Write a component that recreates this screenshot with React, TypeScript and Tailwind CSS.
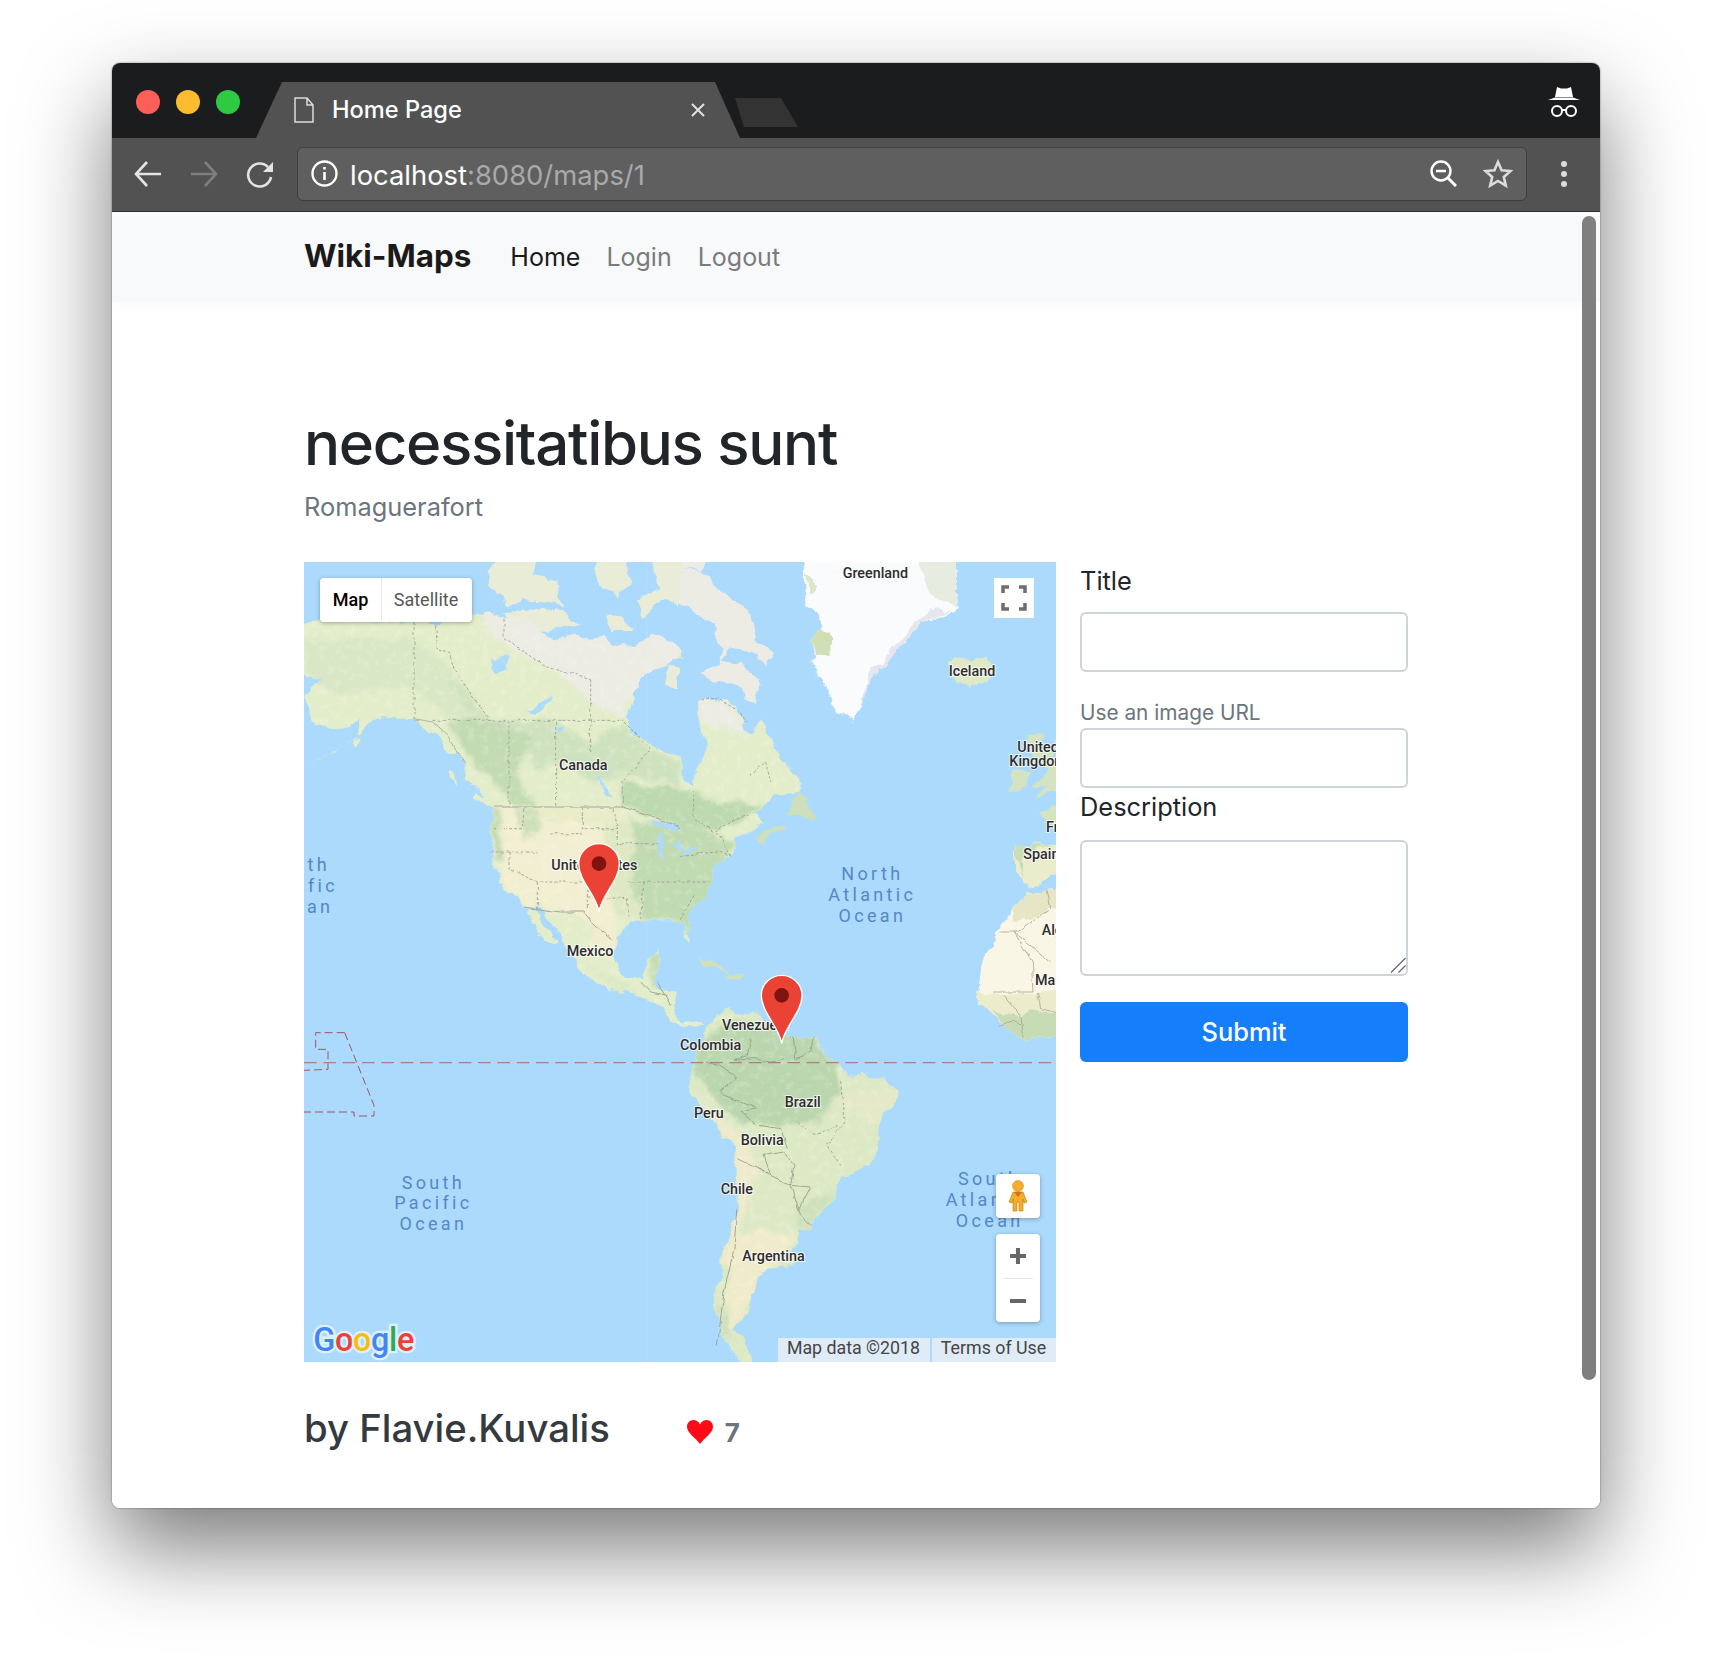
import React from 'react';

const northAmerica =
  'M-30 225 L-30 205 L60 170 L200 175 L340 180 L420 190 L480 165 L550 155 L600 170 L680 175 L700 210 L760 230 L800 215 L860 240 L905 215 L930 245 L1000 250 L1060 215 L1128 255 L1140 285 L1085 305 L1020 340 L985 400 L965 470 L985 510 L1040 550 L1128 590 L1138 640 L1168 680 L1175 610 L1205 560 L1190 500 L1188 410 L1278 420 L1308 460 L1318 500 L1343 520 L1368 470 L1398 530 L1418 590 L1468 620 L1493 660 L1478 690 L1420 700 L1378 730 L1330 770 L1258 810 L1300 775 L1360 755 L1375 790 L1350 810 L1290 830 L1285 880 L1235 900 L1225 960 L1200 1000 L1150 1050 L1160 1130 L1150 1140 L1135 1070 L1128 1080 L1000 1075 L935 1125 L925 1180 L945 1225 L980 1250 L1020 1245 L1030 1200 L1065 1160 L1075 1195 L1050 1250 L1060 1285 L1115 1295 L1110 1330 L1128 1380 L1188 1375 L1203 1395 L1128 1392 L1090 1360 L1060 1325 L1000 1300 L940 1280 L870 1260 L825 1230 L815 1200 L790 1150 L720 1050 L665 1030 L640 1010 L590 960 L560 870 L565 800 L570 740 L530 700 L490 650 L480 600 L430 560 L380 510 L340 475 L270 460 L230 460 L180 500 L80 580 L5 612 L60 590 L160 520 L170 470 L90 510 L20 470 L10 400 L60 350 L-30 330 Z';

const southAmerica =
  'M1203 1405 L1238 1365 L1278 1335 L1288 1350 L1368 1355 L1428 1430 L1468 1425 L1528 1425 L1568 1470 L1593 1505 L1648 1540 L1738 1550 L1778 1580 L1778 1620 L1728 1690 L1723 1760 L1698 1810 L1608 1840 L1588 1900 L1528 1990 L1478 2010 L1483 2040 L1458 2070 L1498 2080 L1458 2110 L1388 2120 L1368 2150 L1338 2200 L1343 2240 L1298 2300 L1323 2340 L1358 2430 L1318 2430 L1258 2330 L1228 2240 L1248 2160 L1253 2100 L1278 2010 L1298 1940 L1298 1840 L1298 1760 L1238 1690 L1178 1620 L1148 1570 L1158 1540 L1178 1490 L1188 1440 Z';

const Pin = ({ x, y }: { x: number; y: number }) => (
  <g transform={`translate(${x} ${y})`}>
    <path
      d="M0 205 C-6 155 -61 112 -61 60 A61 60 0 0 1 61 60 C61 112 6 155 0 205Z"
      fill="#ea4335"
      stroke="#ffffff"
      strokeWidth="4"
    />
    <circle cx="0" cy="60" r="22" fill="#7f1310" />
  </g>
);

const places: [string, number, number][] = [
  ['Greenland', 1616, 48],
  ['Iceland', 1934, 343],
  ['United', 2140, 570],
  ['Kingdom', 2116, 613],
  ['France', 2226, 810],
  ['Spain', 2158, 892],
  ['Algeria', 2213, 1118],
  ['Mali', 2193, 1270],
  ['Canada', 765, 625],
  ['United States', 742, 925],
  ['Mexico', 788, 1182],
  ['Venezuela', 1254, 1404],
  ['Colombia', 1128, 1464],
  ['Brazil', 1442, 1634],
  ['Peru', 1170, 1668],
  ['Bolivia', 1310, 1750],
  ['Chile', 1250, 1896],
  ['Argentina', 1315, 2096],
];

const oceans: [string, number, number, 'middle' | 'end'][] = [
  ['North', 1705, 955, 'middle'],
  ['Atlantic', 1705, 1017, 'middle'],
  ['Ocean', 1705, 1080, 'middle'],
  ['South', 388, 1880, 'middle'],
  ['Pacific', 388, 1942, 'middle'],
  ['Ocean', 388, 2005, 'middle'],
  ['North', 78, 927, 'end'],
  ['Pacific', 102, 990, 'end'],
  ['Ocean', 88, 1052, 'end'],
  ['South', 2057, 1870, 'middle'],
  ['Atlantic', 2057, 1933, 'middle'],
  ['Ocean', 2057, 1995, 'middle'],
];

const borders = [
  'M330 180 L330 470',
  'M395 190 L400 260 L435 270 L450 320 L500 400 L560 470',
  'M385 475 L960 475',
  'M615 475 L615 735',
  'M755 480 L755 735',
  'M860 350 L860 570',
  'M600 170 L600 230 L720 310 L860 350',
  'M960 480 L1040 560 L955 660 L955 735',
  'M1188 410 L1240 410 L1310 450 L1330 480',
  'M1168 680 L1170 770 L1230 810 L1300 770 L1330 760',
  'M1340 640 L1385 600 L1400 660',
  'M570 800 L655 800 L660 740',
  'M615 870 L615 920 L700 960 L850 960 L850 1040',
  'M740 815 L835 815 L835 800 L940 800 L940 845 L1060 845',
  'M560 870 L700 870',
  'M700 960 L700 1040',
  'M835 735 L835 800',
  'M930 740 L940 800',
  'M850 1005 L970 1010 L975 1060',
  'M970 960 L1128 960 L1220 960',
  'M1020 960 L1010 1070',
  'M1128 880 L1240 870 L1290 880',
  'M1170 1000 L1128 1075',
  'M1240 810 L1280 880',
];

const saBorders = [
  'M1208 1500 L1240 1510 L1298 1545 L1250 1590 L1260 1600 L1360 1640 L1310 1650 L1360 1690 L1430 1700 L1450 1760',
  'M1340 1430 L1330 1480 L1290 1495 L1350 1490 L1400 1500 L1440 1490',
  'M1468 1425 L1475 1490 L1520 1470 L1528 1425',
  'M1400 1840 L1380 1780 L1440 1770 L1470 1810 L1460 1870 L1520 1875 L1480 1950',
  'M1360 1820 L1460 1870 L1490 1960 L1520 1990',
  'M1300 1790 L1360 1820 L1400 1840',
  'M1298 1940 L1290 2060 L1260 2190 L1240 2350',
];

const saDashed = ['M1610 1560 L1620 1680 L1570 1750 L1610 1810', 'M1480 1680 L1530 1720 L1600 1690'];

const WorldMap = () => (
  <svg viewBox="0 0 2256 2400" className="absolute inset-0 w-full h-full">
    <defs>
      <clipPath id="naClip">
        <path d={northAmerica} />
      </clipPath>
      <clipPath id="saClip">
        <path d={southAmerica} />
      </clipPath>
      <clipPath id="landClip">
        <path d={northAmerica} />
        <path d={southAmerica} />
      </clipPath>
      <filter id="soft" x="-5%" y="-5%" width="110%" height="110%">
        <feGaussianBlur stdDeviation="7" />
      </filter>
      <filter id="organic" filterUnits="userSpaceOnUse" x="-40" y="-40" width="2336" height="2480">
        <feTurbulence type="fractalNoise" baseFrequency="0.018" numOctaves="4" seed="7" />
        <feDisplacementMap in="SourceGraphic" scale="38" xChannelSelector="R" yChannelSelector="G" />
        <feGaussianBlur stdDeviation="1.2" />
      </filter>
      <filter id="fineLine" filterUnits="userSpaceOnUse" x="-40" y="-40" width="2336" height="2480">
        <feTurbulence type="fractalNoise" baseFrequency="0.03" numOctaves="3" seed="3" />
        <feDisplacementMap in="SourceGraphic" scale="14" xChannelSelector="R" yChannelSelector="G" />
      </filter>
      <filter id="mottle" filterUnits="userSpaceOnUse" x="0" y="0" width="2256" height="2400">
        <feTurbulence type="fractalNoise" baseFrequency="0.045" numOctaves="3" seed="11" />
        <feColorMatrix values="0 0 0 0 1 0 0 0 0 1 0 0 0 0 0.92 3.4 0 0 0 -1.7" />
      </filter>
    </defs>
    <rect width="2256" height="2400" fill="#abdafd" />
    <path d="M1028 0 V2400" stroke="#b6dffb" strokeWidth="3" />

    <g filter="url(#organic)">
      {/* arctic islands */}
      <g fill="#e9ecd6">
        <path d="M545 30 L600 -30 L700 -30 L680 40 L760 50 L770 130 L660 110 L620 130 L560 70Z" />
        <path d="M870 -30 L950 -30 L980 60 L940 110 L880 60Z" />
        <path d="M1040 -30 L1128 -30 L1128 130 L1080 110 L1020 170 L1000 120 L1060 70Z" />
        <path d="M600 150 L760 140 L830 180 L700 215 L620 200Z" />
        <path d="M905 170 L950 160 L990 210 L930 210Z" />
        <path d="M1080 310 L1128 320 L1128 380 L1090 370Z" />
      </g>
      <g fill="#ecece5">
        <path d="M1128 20 L1208 40 L1258 90 L1338 150 L1358 230 L1413 270 L1388 320 L1338 270 L1278 250 L1248 300 L1318 300 L1373 370 L1353 420 L1278 370 L1188 340 L1238 310 L1258 260 L1228 190 L1168 150 L1128 120Z" />
        <path d="M1128 -30 L1220 -30 L1190 30 L1128 20Z" />
      </g>

      {/* north america */}
      <path d={northAmerica} fill="#e3edca" />
      <g clipPath="url(#naClip)">
        <g filter="url(#soft)">
          <path d="M540 150 L1128 100 L1128 300 L960 420 L980 480 L860 420 L760 330 L640 270 L540 200Z" fill="#ecece5" />
          <path d="M1188 410 L1278 420 L1330 520 L1260 490 L1200 490Z" fill="#ecece5" />
          <path d="M0 230 L330 230 L450 330 L560 470 L430 470 L330 380 L240 380 L100 400 L0 330Z" fill="#d9e7c6" />
          <path d="M420 330 L560 470 L760 480 L860 540 L960 490 L1040 560 L1128 600 L1128 680 L1000 640 L880 660 L760 600 L700 620 L620 500 L480 440Z" fill="#cfe2bf" />
          <path d="M430 480 L560 470 L680 530 L640 640 L690 730 L640 735 L560 650 L470 560Z" fill="#c2dbb2" />
          <path d="M955 660 L1128 685 L1178 700 L1258 720 L1378 730 L1300 780 L1240 810 L1170 800 L1128 790 L955 735Z" fill="#bdd9af" />
          <path d="M570 735 L960 735 L950 1000 L930 1130 L870 1090 L770 1050 L660 1030 L590 950 L570 800Z" fill="#f2eed2" />
          <path d="M700 735 L950 735 L945 800 L700 770Z" fill="#e9ecc8" />
          <path d="M640 740 L700 740 L710 820 L650 830Z" fill="#cfe0b9" />
          <path d="M900 780 L1000 780 L1000 1075 L930 1060Z" fill="#dfe8c3" />
          <path d="M985 780 L1128 790 L1290 840 L1240 960 L1170 1130 L1128 1080 L1020 1075 L990 1000Z" fill="#c0dab1" />
          <path d="M565 740 L590 740 L600 900 L570 890Z" fill="#c6dcb5" />
          <path d="M820 1200 L960 1260 L1000 1290 L1050 1320 L1100 1380 L1040 1320 L920 1270Z" fill="#dbe8c4" />
          <path d="M1040 1180 L1075 1165 L1070 1280 L1040 1270Z" fill="#c4dcb4" />
          <path d="M860 1060 L930 1130 L930 1200 L880 1190Z" fill="#f0edcf" />
        </g>
      </g>
      {/* lakes */}
      <g fill="#abdafd">
        <path d="M550 290 L620 275 L610 320 L580 330Z" />
        <path d="M665 445 L740 400 L750 410 L700 450Z" />
        <path d="M750 495 L785 490 L765 510Z" />
        <path d="M880 645 L895 650 L925 700 L905 695Z" />
        <path d="M1040 775 L1110 785 L1128 800 L1060 795Z" />
        <path d="M1065 830 L1085 815 L1085 880 L1070 895Z" />
        <path d="M1128 815 L1140 870 L1105 860 L1128 840Z" />
        <path d="M1128 875 L1170 845 L1178 852 L1135 885Z" />
      </g>
      <g fill="#e3edca">
        <path d="M670 1035 L700 1060 L770 1150 L745 1150 L700 1100 L665 1050Z" />
        <path d="M510 695 L560 725 L555 740 L505 710Z" />
        <path d="M438 625 L455 630 L462 660 L445 650Z" />
        <path d="M1350 825 L1428 785 L1438 795 L1368 840Z" fill="#cde0bb" />
        <path d="M1448 760 L1478 690 L1528 740 L1533 780 L1490 760Z" fill="#cde0bb" />
        <path d="M145 530 L170 520 L160 555Z" />
        <path d="M1188 1184 L1230 1195 L1280 1240 L1240 1225 L1200 1200Z" fill="#cfe2bc" />
        <path d="M1258 1238 L1320 1242 L1315 1255 L1265 1252Z" fill="#cfe2bc" />
      </g>

      {/* greenland and iceland */}
      <path d="M1503 -30 L1958 -30 L1958 130 L1943 150 L1848 190 L1788 240 L1738 300 L1703 350 L1668 430 L1658 478 L1598 450 L1558 370 L1528 290 L1523 240 L1558 190 L1508 130 L1498 40Z" fill="#fafbfd" />
      <path d="M1523 240 L1558 190 L1578 230 L1580 285 L1530 275Z" fill="#d2dfb6" />
      <path d="M1848 -30 L1958 -30 L1958 130 L1900 120 L1860 70Z" fill="#e7ece1" />
      <path d="M1503 30 L1540 70 L1520 100Z" fill="#dbe6cb" />
      <path d="M1848 190 L1938 145 L1880 150 L1830 190 L1788 240 L1740 295 L1700 330 L1670 420 L1668 430 L1700 360 L1740 310 Z" fill="#e5e7ec" />
      <path d="M1933 300 L1958 285 L1998 295 L2038 280 L2073 330 L2058 350 L1998 378 L1948 350Z" fill="#dfe9c6" />

      {/* europe and africa */}
      <g fill="#d4e4c0">
        <path d="M2128 625 L2173 625 L2168 670 L2123 680Z" />
        <path d="M2168 530 L2213 515 L2208 560 L2290 600 L2290 690 L2190 710 L2230 680 L2195 665 L2230 620 L2190 590Z" />
        <path d="M2290 730 L2198 745 L2238 790 L2290 850Z" />
      </g>
      <path d="M2133 845 L2290 850 L2290 930 L2228 950 L2178 975 L2148 955 L2133 930Z" fill="#eaeccc" />
      <path d="M2133 845 L2240 852 L2160 870 L2150 950Z" fill="#c9deb6" />
      <path d="M2178 985 L2290 985 L2290 1430 L2218 1420 L2158 1440 L2088 1390 L2028 1320 L2023 1290 L2033 1200 L2038 1190 L2088 1110 L2128 1040Z" fill="#faf6e6" />
      <path d="M2178 985 L2290 985 L2290 1040 L2200 1060 L2130 1080 L2128 1040Z" fill="#e6e6c6" />
      <path d="M2023 1290 L2100 1300 L2290 1280 L2290 1430 L2218 1420 L2158 1440 L2088 1390 L2028 1320Z" fill="#eaeccc" />
      <path d="M2060 1340 L2150 1360 L2290 1340 L2290 1430 L2218 1420 L2158 1440 L2088 1390Z" fill="#c7dcb4" />

      {/* south america */}
      <path d={southAmerica} fill="#dde9c5" />
      <g clipPath="url(#saClip)">
        <g filter="url(#soft)">
          <path d="M1188 1440 L1290 1370 L1528 1430 L1600 1510 L1600 1600 L1540 1680 L1430 1690 L1310 1680 L1230 1600 L1170 1540Z" fill="#bad6ae" />
          <path d="M1148 1570 L1298 1760 L1298 1940 L1278 2010 L1253 2100 L1275 2110 L1320 1940 L1368 1820 L1308 1720 L1228 1650Z" fill="#efeacd" />
          <path d="M1280 2030 L1390 2000 L1478 2030 L1368 2150 L1298 2300 L1268 2300Z" fill="#f0ebcb" />
          <path d="M1480 1920 L1590 1890 L1530 1990 L1480 2010Z" fill="#cfe1ba" />
          <path d="M1600 1600 L1778 1580 L1730 1690 L1640 1640Z" fill="#e5e9c8" />
          <path d="M1228 2240 L1260 2240 L1290 2330 L1258 2330Z" fill="#cfe0c0" />
        </g>
      </g>
    </g>

    <g clipPath="url(#landClip)" opacity="0.2">
      <rect width="2256" height="2400" filter="url(#mottle)" />
    </g>

    {/* country borders */}
    <g filter="url(#fineLine)">
      <g fill="none" stroke="#9c9a90" strokeWidth="2.5" strokeDasharray="9 6">
        {borders.map((d, i) => (
          <path key={i} d={d} />
        ))}
        {saDashed.map((d, i) => (
          <path key={i} d={d} />
        ))}
      </g>
      <path d="M570 735 L955 735 L1040 760 L1128 800" fill="none" stroke="#a6a69c" strokeWidth="3" />
      <path d="M660 1035 L770 1050 L840 1050 L870 1090 L925 1130" fill="none" stroke="#a6a69c" strokeWidth="3" />
      <path d="M330 470 L385 480 L430 520 L480 600" fill="none" stroke="#a6a69c" strokeWidth="2.5" />
      <g fill="none" stroke="#8f9a88" strokeWidth="2.5">
        {saBorders.map((d, i) => (
          <path key={i} d={d} />
        ))}
        <path d="M1010 1260 L1040 1290 L1090 1300 M1060 1260 L1100 1330" />
      </g>
      <g fill="none" stroke="#a8a596" strokeWidth="2.5">
        <path d="M2070 1290 L2190 1290 L2185 1200 L2130 1110 L2240 1200" />
        <path d="M2090 1110 L2140 1110 L2240 1040 L2230 985" />
        <path d="M2100 1300 L2150 1360 L2160 1430" />
        <path d="M2200 1290 L2210 1340 L2256 1350" />
        <path d="M2085 1390 L2130 1375 L2150 1390" />
      </g>
    </g>

    {/* equator and the pacific line */}
    <path d="M0 1502 H2256" fill="none" stroke="#aa7f86" strokeWidth="4" strokeDasharray="38 20" />
    <path
      d="M122 1412 L35 1412 L35 1462 L72 1462 L72 1522 L0 1525 M122 1412 L210 1630 L210 1662 L150 1662 L150 1650 L0 1650"
      fill="none"
      stroke="#a3555f"
      strokeWidth="3"
      strokeDasharray="24 12"
    />

    {/* labels */}
    <g fontFamily="Roboto, sans-serif" fontWeight="500" fontSize="43" fill="#2c2c2c" stroke="#ffffff" strokeWidth="6" strokeOpacity="0.75" className="[paint-order:stroke]">
      {places.map(([name, x, y]) => (
        <text key={name} x={x} y={y}>
          {name}
        </text>
      ))}
    </g>
    <g fontFamily="Roboto, sans-serif" fontSize="54" fill="#5587c8" letterSpacing="10">
      {oceans.map(([name, x, y, anchor], i) => (
        <text key={i} x={x} y={y} textAnchor={anchor}>
          {name}
        </text>
      ))}
    </g>

    <Pin x={885} y={845} />
    <Pin x={1433} y={1240} />

    <text x="28" y="2366" fontFamily="Roboto, sans-serif" fontSize="97" fontWeight="500" letterSpacing="-1" stroke="#dff0fd" strokeWidth="14" className="[paint-order:stroke]">
      <tspan fill="#4285f4">G</tspan>
      <tspan fill="#ea4335">o</tspan>
      <tspan fill="#fbbc05">o</tspan>
      <tspan fill="#4285f4">g</tspan>
      <tspan fill="#34a853">l</tspan>
      <tspan fill="#ea4335">e</tspan>
    </text>
  </svg>
);

const MapControls = () => (
  <>
    <div className="absolute left-4 top-4 flex h-11 w-[152px] rounded-sm bg-white pb-px shadow-[0_1px_4px_rgba(0,0,0,0.3)] font-['Roboto',sans-serif] text-[18px]">
      <div className="flex w-[62px] items-center justify-center border-r border-[#e6e6e6] font-medium text-black">Map</div>
      <div className="flex flex-1 items-center justify-center pr-0.5 text-[#565656]">Satellite</div>
    </div>
    <div className="absolute left-[690px] top-4 flex h-10 w-10 items-center justify-center bg-white">
      <svg width="26" height="26" viewBox="0 0 26 26" fill="none" stroke="#6e6e6e" strokeWidth="3.5">
        <path d="M2 8 V2 H8 M18 2 H24 V8 M24 18 V24 H18 M8 24 H2 V18" />
      </svg>
    </div>
    <div className="absolute left-[692px] top-[612px] flex h-11 w-11 items-center justify-center rounded-sm bg-white shadow-[0_1px_4px_rgba(0,0,0,0.3)]">
      <svg width="20" height="32" viewBox="0 0 20 32">
        <circle cx="10" cy="6" r="5.5" fill="#f6ae29" stroke="#c98a1d" strokeWidth="0.5" />
        <path d="M5 12 H15 L19 22 L16 23 L15 19 V31 H11 V22 H9 V31 H5 V19 L4 23 L1 22Z" fill="#f6ae29" stroke="#b07a1a" strokeWidth="0.6" />
        <path d="M6 12 L10 17 L14 12Z" fill="#d5702a" />
      </svg>
    </div>
    <div className="absolute left-[692px] top-[672px] flex h-[88px] w-11 flex-col items-center rounded-sm bg-white shadow-[0_1px_4px_rgba(0,0,0,0.3)]">
      <div className="flex h-11 w-full items-center justify-center">
        <svg width="18" height="18" viewBox="0 0 18 18" fill="#666666">
          <path d="M7 1 H11 V7 H17 V11 H11 V17 H7 V11 H1 V7 H7Z" />
        </svg>
      </div>
      <div className="h-px w-[30px] bg-[#e6e6e6]" />
      <div className="flex h-11 w-full items-center justify-center pt-0.5">
        <svg width="18" height="18" viewBox="0 0 18 18" fill="#666666">
          <path d="M1 7 H17 V11 H1Z" />
        </svg>
      </div>
    </div>
    <div className="absolute bottom-0 right-0 flex h-6 gap-0.5 font-['Roboto',sans-serif] text-[17.8px] leading-[19px] text-[#444444]">
      <div className="w-[152px] bg-[#dfecf8] pr-px text-center">Map data ©2018</div>
      <div className="w-[124px] bg-[#dfecf8] pr-px text-center">Terms of Use</div>
    </div>
  </>
);

const ChromeBar = () => (
  <>
    <div className="relative flex h-[75px] shrink-0 bg-[#1b1c1e]">
      <div className="ml-6 mt-[27px] flex gap-4">
        <div className="h-6 w-6 rounded-full bg-[#fc5f57]" />
        <div className="h-6 w-6 rounded-full bg-[#fdbc2f]" />
        <div className="h-6 w-6 rounded-full bg-[#2ecb42]" />
      </div>
      <div className="ml-4 mt-[19px] flex h-14 w-[484px] items-center bg-[#525252] pl-[38px] pr-[35px] [clip-path:polygon(0_100%,26px_0,459px_0,484px_100%)]">
        <svg width="20" height="26" viewBox="0 0 20 26" fill="none" stroke="#dcdcdc" strokeWidth="1.5">
          <path d="M1 1 H13 L19 8 V25 H1Z M13 1 V8 H19" />
        </svg>
        <span className="ml-[18px] flex-1 font-['Inter',sans-serif] text-[23.6px] font-medium text-white">Home Page</span>
        <svg width="14" height="14" viewBox="0 0 14 14" stroke="#e2e2e2" strokeWidth="2">
          <path d="M1 1 L13 13 M13 1 L1 13" />
        </svg>
      </div>
      <div className="-ml-[5px] mt-[35px] h-[29px] w-[63px] bg-[#333333] [clip-path:polygon(0_0,46px_0,63px_100%,9px_100%)]" />
      <svg className="absolute right-5 top-6" width="32" height="30" viewBox="0 0 32 30">
        <path d="M9 0 L13 1.5 H19 L23 0 L25 10 H7Z" fill="#ffffff" />
        <path d="M0 13 L7 10.5 H25 L32 13Z" fill="#ffffff" />
        <g fill="none" stroke="#ffffff" strokeWidth="2">
          <circle cx="9" cy="24" r="5" />
          <circle cx="23" cy="24" r="5" />
          <path d="M14 23 H18" />
        </g>
      </svg>
    </div>
    <div className="flex h-[74px] shrink-0 items-center border-b border-[#2e2e2e] bg-[#525252] pb-0.5">
      <svg className="ml-[22px]" width="28" height="26" viewBox="0 0 28 26" fill="none" stroke="#e4e4e4" strokeWidth="2.6">
        <path d="M27 13 H2 M13 1 L2 13 L13 25" />
      </svg>
      <svg className="ml-[28px]" width="28" height="26" viewBox="0 0 28 26" fill="none" stroke="#7e7e7e" strokeWidth="2.6">
        <path d="M1 13 H26 M15 1 L26 13 L15 25" />
      </svg>
      <svg className="ml-[28px]" width="28" height="28" viewBox="0 0 28 28" fill="none">
        <path d="M22 7 A11.5 11.5 0 1 0 25 17" stroke="#e4e4e4" strokeWidth="2.6" />
        <path d="M27 2 V12 H17Z" fill="#e4e4e4" />
      </svg>
      <div className="ml-[23px] flex h-[54px] w-[1230px] items-center rounded-md border border-[#3e3e3e] bg-[#5f5f5f] pl-[13px] pr-3">
        <svg width="27" height="27" viewBox="0 0 27 27" fill="none">
          <circle cx="13.5" cy="13.5" r="12" stroke="#ffffff" strokeWidth="2.4" />
          <path d="M13.5 12 V20 M13.5 7 V9.5" stroke="#ffffff" strokeWidth="2.6" />
        </svg>
        <span className="ml-3 flex-1 pt-1 font-['Inter',sans-serif] text-[27.4px] text-white">
          localhost<span className="text-[#a9a9a9]">:8080/maps/1</span>
        </span>
        <svg width="27" height="27" viewBox="0 0 27 27" fill="none" stroke="#ffffff" strokeWidth="2.4">
          <circle cx="11" cy="11" r="9.5" />
          <path d="M6 11 H16" />
          <path d="M18 18 L26 26" strokeWidth="3" />
        </svg>
        <svg className="ml-[26px] mr-[1px]" width="30" height="29" viewBox="0 0 30 29" fill="none" stroke="#dcdcdc" strokeWidth="2.6">
          <path d="M15 3 L18.6 11.2 L27.5 12 L20.8 17.9 L22.8 26.6 L15 22 L7.2 26.6 L9.2 17.9 L2.5 12 L11.4 11.2Z" />
        </svg>
      </div>
      <div className="ml-[34px] flex flex-col gap-1">
        <div className="h-1.5 w-1.5 rounded-full bg-[#dcdcdc]" />
        <div className="h-1.5 w-1.5 rounded-full bg-[#dcdcdc]" />
        <div className="h-1.5 w-1.5 rounded-full bg-[#dcdcdc]" />
      </div>
    </div>
  </>
);

const Field = ({ className }: { className: string }) => (
  <input type="text" className={`block h-[60px] w-full rounded-md border-2 border-[#ced4da] bg-white ${className}`} />
);

export default function App() {
  return (
    <div className="h-[1668px] w-[1712px] overflow-hidden bg-white pl-[112px] pt-[63px] font-['Inter',sans-serif]">
      <div className="relative flex h-[1445px] w-[1488px] flex-col overflow-hidden rounded-lg shadow-[0_40px_88px_rgba(0,0,0,0.52),0_0_2px_rgba(0,0,0,0.5)]">
        <ChromeBar />
        <div className="relative flex-1 bg-white">
          <nav className="flex h-[90px] items-center bg-[#f8f9fb] pl-[192px] pt-0.5 shadow-[0_6px_14px_rgba(0,0,0,0.02)]">
            <span className="-mt-0.5 text-[31.4px] font-bold text-[#1a1a1a]">Wiki-Maps</span>
            <span className="ml-[39px] text-[25px] text-[#1a1a1a]">Home</span>
            <span className="ml-[26px] text-[25px] text-[#7b7b7b]">Login</span>
            <span className="ml-[26px] text-[25px] text-[#7b7b7b]">Logout</span>
          </nav>
          <main className="pl-[192px]">
            <h1 className="pt-[105px] text-[60px] font-medium leading-[72px] tracking-[-1.3px] text-[#212529]">necessitatibus sunt</h1>
            <p className="mt-3 text-[25.4px] leading-8 text-[#6c757d]">Romaguerafort</p>
            <div className="mt-[39px] flex">
              <div className="relative h-[800px] w-[752px] overflow-hidden">
                <WorldMap />
                <MapControls />
              </div>
              <form className="ml-6 w-[328px]">
                <label className="block text-[25.4px] leading-[38px] text-[#212529]">Title</label>
                <Field className="mt-3" />
                <p className="mt-[26px] text-[20.8px] leading-[30px] text-[#6c757d]">Use an image URL</p>
                <Field className="" />
                <label className="block text-[25.4px] leading-[38px] text-[#212529]">Description</label>
                <div className="relative mt-[14px]">
                  <textarea className="block h-[136px] w-full resize-none rounded-md border-2 border-[#ced4da] bg-white" />
                  <svg className="absolute bottom-[3px] right-[2px]" width="16" height="16" viewBox="0 0 16 16" stroke="#666666" strokeWidth="1.2">
                    <path d="M1 15.5 L15.5 1 M8.5 15.5 L15.5 8.5" />
                  </svg>
                </div>
                <button type="button" className="mt-[26px] h-[60px] w-full rounded-md bg-[#157efb] text-[25.4px] font-medium text-white">
                  Submit
                </button>
              </form>
            </div>
            <div className="mt-[42px] flex items-center">
              <span className="text-[38.3px] font-medium leading-[48px] text-[#343a40]">by Flavie.Kuvalis</span>
              <svg className="ml-[77px] mt-2" width="26" height="24" viewBox="0 0 27 24" preserveAspectRatio="none" fill="#ff0a16">
                <path d="M13.5 24 C9 18 0 13 0 6.8 C0 2.8 3 0 6.6 0 C9.6 0 12.2 1.6 13.5 4.4 C14.8 1.6 17.4 0 20.4 0 C24 0 27 2.8 27 6.8 C27 13 18 18 13.5 24Z" />
              </svg>
              <span className="ml-[12px] mt-2 text-[26px] font-bold text-[#6c757d]">7</span>
            </div>
          </main>
          <div className="absolute right-[4px] top-[4px] h-[1164px] w-[14px] rounded-full bg-[#7f7f7f]" />
        </div>
      </div>
    </div>
  );
}
